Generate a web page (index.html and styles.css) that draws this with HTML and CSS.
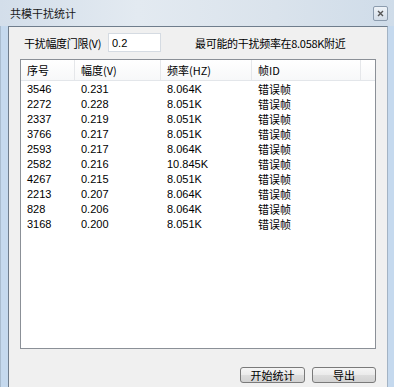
FILE: index.html
```html
<!DOCTYPE html>
<html lang="zh-CN">
<head>
    <meta charset="UTF-8">
    <title>共模干扰统计</title>
    <link rel="stylesheet" href="styles.css">
</head>
<body>
    <div class="window">
        <div class="titlebar">
            <span class="title">共模干扰统计</span>
            <span class="close">
                <svg width="7" height="7" viewBox="0 0 7 7"><path d="M1 1L6 6M6 1L1 6" stroke="#555" stroke-width="1.4"/></svg>
            </span>
        </div>

        <div class="client">
            <div class="toolbar">
                <span class="label">干扰幅度门限(V)</span>
                <input class="threshold" type="text" value="0.2">
                <span class="hint">最可能的干扰频率在8.058K附近</span>
            </div>

            <div class="list">
                <div class="row head">
                    <span class="c1">序号</span>
                    <span class="c2">幅度(V)</span>
                    <span class="c3">频率(HZ)</span>
                    <span class="c4">帧ID</span>
                    <span class="c5"></span>
                </div>
                <div class="row"><span class="c1">3546</span><span class="c2">0.231</span><span class="c3">8.064K</span><span class="c4">错误帧</span></div>
                <div class="row"><span class="c1">2272</span><span class="c2">0.228</span><span class="c3">8.051K</span><span class="c4">错误帧</span></div>
                <div class="row"><span class="c1">2337</span><span class="c2">0.219</span><span class="c3">8.051K</span><span class="c4">错误帧</span></div>
                <div class="row"><span class="c1">3766</span><span class="c2">0.217</span><span class="c3">8.051K</span><span class="c4">错误帧</span></div>
                <div class="row"><span class="c1">2593</span><span class="c2">0.217</span><span class="c3">8.064K</span><span class="c4">错误帧</span></div>
                <div class="row"><span class="c1">2582</span><span class="c2">0.216</span><span class="c3">10.845K</span><span class="c4">错误帧</span></div>
                <div class="row"><span class="c1">4267</span><span class="c2">0.215</span><span class="c3">8.051K</span><span class="c4">错误帧</span></div>
                <div class="row"><span class="c1">2213</span><span class="c2">0.207</span><span class="c3">8.064K</span><span class="c4">错误帧</span></div>
                <div class="row"><span class="c1">828</span><span class="c2">0.206</span><span class="c3">8.064K</span><span class="c4">错误帧</span></div>
                <div class="row"><span class="c1">3168</span><span class="c2">0.200</span><span class="c3">8.051K</span><span class="c4">错误帧</span></div>
            </div>

            <div class="actions">
                <button class="btn start">开始统计</button>
                <button class="btn export">导出</button>
            </div>
        </div>
    </div>
</body>
</html>
```

FILE: styles.css
```css
* {
    margin: 0;
    padding: 0;
    box-sizing: border-box;
}

body {
    background: #fff;
    font-family: "Liberation Sans", "Noto Sans CJK SC", sans-serif;
    font-size: 11px;
    color: #000;
}

.window {
    width: 394px;
    height: 387px;
    display: flex;
    flex-direction: column;
    padding: 0 6px 0 3px;
    background: #c5d9ee;
    border-left: 1px solid #a9bccf;
}

.titlebar {
    height: 26px;
    flex: none;
    display: flex;
    align-items: center;
    justify-content: space-between;
    margin: 0 -6px 0 -4px;
    padding: 0 6px 0 10px;
    background: linear-gradient(90deg, #d3deea 0%, #e3eaf1 35%, #dae3ec 70%, #cfdce9 100%);
}

.title {
    font-family: "Noto Sans CJK SC", sans-serif;
    font-size: 11px;
    color: #1a1a1a;
}

.close {
    width: 15px;
    height: 15px;
    display: flex;
    align-items: center;
    justify-content: center;
    border: 1px solid #8c9cae;
    border-radius: 2px;
    background: linear-gradient(#eef3f8, #d3dde8);
}

.client {
    flex: 1;
    margin-left: 4px;
    display: flex;
    flex-direction: column;
    background: #f0f0f0;
    border-left: 1px solid #6f7d8c;
    border-top: 1px solid #6f7d8c;
    border-right: 1px solid #a3b3c4;
}

.toolbar {
    display: flex;
    align-items: center;
    height: 19px;
    margin-top: 6px;
    padding-left: 15px;
}

.label {
    font-family: "Noto Sans CJK SC", sans-serif;
    font-size: 11px;
    width: 84px;
}

.label, .hint {
    letter-spacing: -0.3px;
}

.threshold {
    width: 53px;
    height: 19px;
    border: 1px solid #d5dbe2;
    background: #fff;
    padding-left: 3px;
    font-family: "Liberation Sans", sans-serif;
    font-size: 11px;
    outline: none;
}

.hint {
    margin-left: 34px;
    font-family: "Noto Sans CJK SC", sans-serif;
    font-size: 11px;
}

.list {
    margin: 7px 11px 0 11px;
    height: 290px;
    background: #fff;
    border: 1px solid #8b9097;
}

.row {
    display: flex;
    height: 15px;
    align-items: center;
}

.row span {
    padding-left: 6px;
    white-space: nowrap;
}

.row.head {
    height: 21px;
    background: linear-gradient(#ffffff, #f7f8f9);
    border-bottom: 1px solid #e3e6ea;
    font-family: "Noto Sans CJK SC", sans-serif;
}

.row.head span {
    height: 100%;
    display: flex;
    align-items: center;
    border-right: 1px solid #e5e7ea;
}

.row.head .c5 {
    border-right: none;
}

.c1 { width: 54px; }
.c2 { width: 86px; }
.c3 { width: 91px; }
.c4 { width: 109px; }
.c5 { width: 14px; }

.actions {
    display: flex;
    justify-content: flex-end;
    gap: 7px;
    margin-top: auto;
    margin-bottom: 4px;
    padding-right: 11px;
}

.btn {
    height: 16px;
    border: 1px solid #7a7a7a;
    border-radius: 3px;
    background: linear-gradient(#f5f5f5 0%, #ebebeb 50%, #dddddd 51%, #d2d2d2 100%);
    font-family: "Noto Sans CJK SC", sans-serif;
    font-size: 11px;
    color: #000;
    line-height: 14px;
}

.start { width: 65px; }
.export { width: 64px; }
```
